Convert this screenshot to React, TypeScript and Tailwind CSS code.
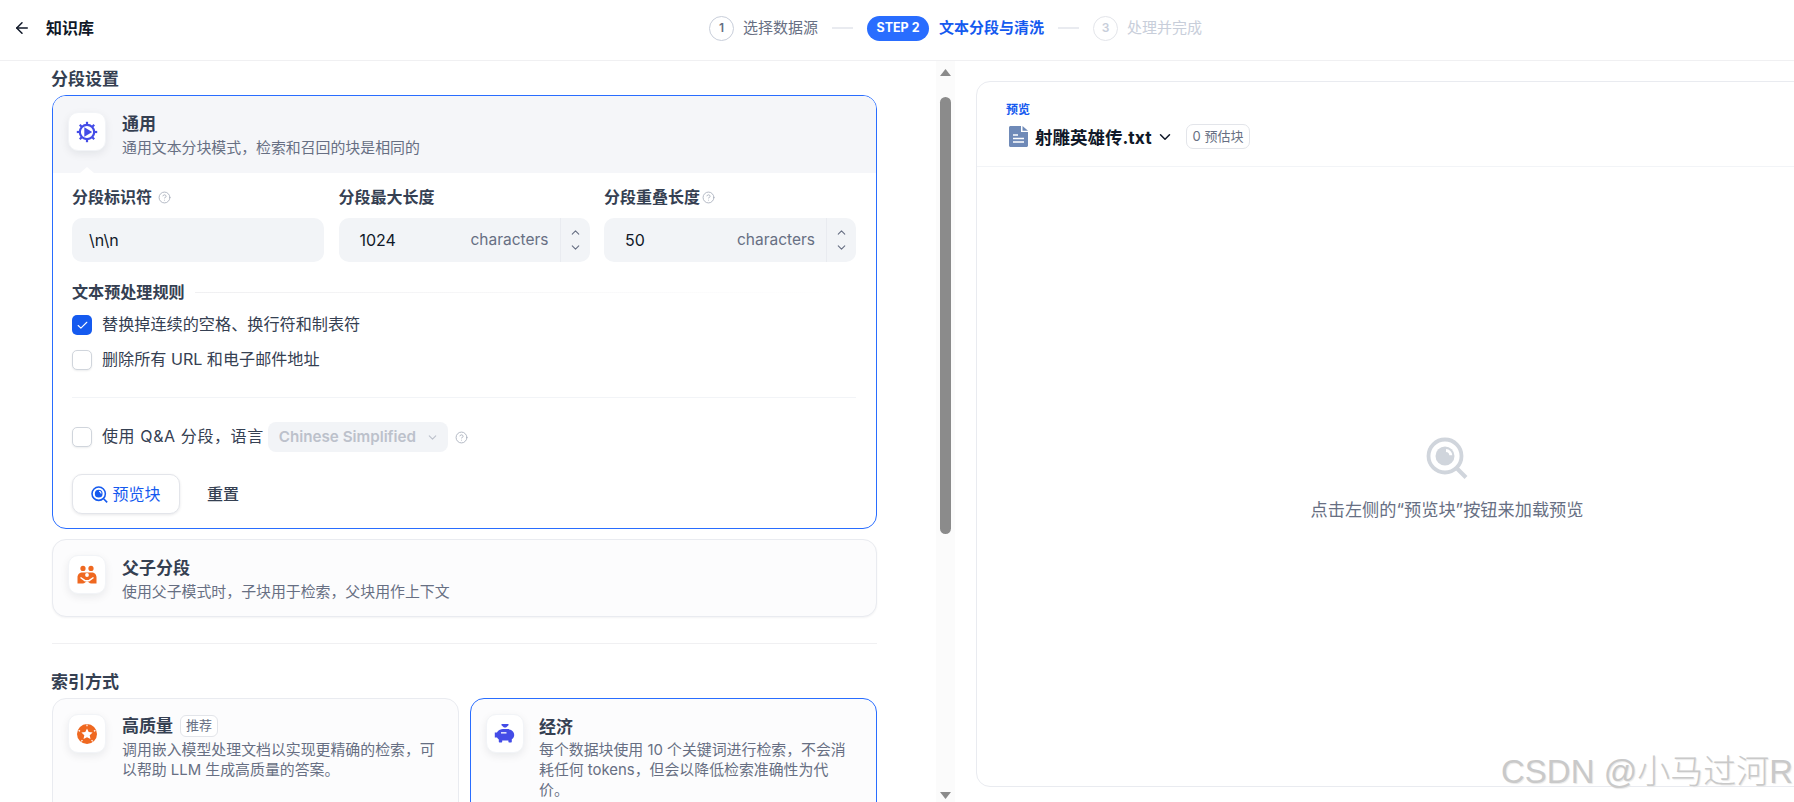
import React from "react";
import { ArrowLeft, Check, ChevronDown, ChevronUp, CircleHelp } from "lucide-react";

const GearPlayIcon = () => (
    <svg width="22" height="22" viewBox="0 0 22 22" fill="none">
        <circle cx="11" cy="11" r="7.2" stroke="#444ce7" strokeWidth="2.2" />
        {[0, 45, 90, 135, 180, 225, 270, 315].map((a) => (
            <rect key={a} x="9.900" y="0.800" width="2.200" height="3" fill="#444ce7" transform={`rotate(${a} 11 11)`} />
        ))}
        <path d="M8.300 6.300 16.200 11l-7.900 4.700z" fill="#444ce7" />
    </svg>
);

const ParentChildIcon = () => (
    <svg width="22" height="22" viewBox="0 0 22 22" fill="none">
        <circle cx="7" cy="4.400" r="2.600" fill="#ef6820" />
        <circle cx="15" cy="4.400" r="2.600" fill="#ef6820" />
        <path d="M1.500 19.500v-6.200C1.500 10.400 3.600 8.400 6.400 8.400h9.200c2.800 0 4.900 2 4.900 4.900v6.200h-5.200c-1 0-1.800-.4-2.400-.9L11 17l-1.900 1.600c-.6.5-1.400.9-2.400.9z" fill="#ef6820" />
        <circle cx="11" cy="11" r="1.900" fill="#fff" />
        <path d="M4.500 13.500 9 16.700h4l4.500-3.200" stroke="#fff" strokeWidth="1.500" />
    </svg>
);

const QualityIcon = () => (
    <svg width="22" height="22" viewBox="0 0 22 22" fill="none">
        <circle cx="11" cy="11" r="10" fill="#ef6820" />
        <path d="m11 5.400 1.700 3.600 3.900.5-2.900 2.700.8 3.900-3.500-1.900-3.500 1.900.8-3.900-2.900-2.700 3.900-.5z" fill="#fff" />
        <path d="M11 1.500v1.700M2.600 7.400l1.500.8M19.400 7.400l-1.500.8M5.400 18.300l1-1.300M16.600 18.300l-1-1.300" stroke="#fff" strokeWidth="1.200" />
    </svg>
);

const PiggyIcon = () => (
    <svg width="22" height="22" viewBox="0 0 22 22" fill="none">
        <path d="M7.500 1h7v1.200l-2.500 2.300h-2L7.500 2.200z" fill="#444ce7" />
        <path d="M.800 9.600h2.100c.8-1.600 2.300-3 4.500-3.300l1.500-.2h4c4 0 7.300 2.200 7.300 5.800 0 1.900-.9 3.300-2.400 4.400v2.500c0 .4-.3.700-.7.700h-2c-.4 0-.7-.3-.7-.7v-1.200H8.200v1.200c0 .4-.3.700-.7.700h-2c-.4 0-.7-.3-.7-.7v-2.300c-.8-.5-1.400-1.200-1.800-2H.800z" fill="#444ce7" />
        <rect x="7" y="9.200" width="5.500" height="1.300" fill="#fff" />
    </svg>
);

const PreviewIcon = ({ className, size }: { className: string; size: number }) => (
    <svg width={size} height={size} viewBox="0 0 42 42" fill="none" className={className}>
        <circle cx="19" cy="19" r="16.500" stroke="currentColor" strokeWidth="3.800" />
        <circle cx="19" cy="19" r="9.500" fill="currentColor" />
        <path d="M20 13.500a5 5 0 0 1 4.800 4.800" stroke="#fff" strokeWidth="3" />
        <path d="m31 31.500 9 9" stroke="currentColor" strokeWidth="4" />
    </svg>
);

const FileIcon = () => (
    <svg width="19" height="21" viewBox="0 0 19 21" fill="none" className="ml-[3px] shrink-0">
        <path d="M1.500 0H12v6h7v13.500c0 .8-.7 1.500-1.500 1.500h-16C.7 21 0 20.300 0 19.500v-18C0 .7.7 0 1.500 0z" fill="#6f8ab8" />
        <path d="M13.500 0 19 4.800h-5.500z" fill="#6f8ab8" />
        <path d="M4 9h5M4 12.500h11M4 16h11" stroke="#fff" strokeWidth="1.600" />
    </svg>
);

const Help = () => <CircleHelp size={13} strokeWidth={1.6} className="text-[#a8afbc] shrink-0" />;

const IconBox = ({ children }: { children: React.ReactNode }) => (
    <div className="w-[38px] h-[39px] shrink-0 rounded-[10px] bg-white border border-[#f2f4f7] shadow-[0_3px_8px_rgba(16,24,40,0.08)] flex items-center justify-center">
        {children}
    </div>
);

const ModeHeader = ({ icon, title, desc, lower }: { icon: React.ReactNode; title: string; desc: string; lower?: boolean }) => (
    <div className="flex gap-[16px]">
        <IconBox>{icon}</IconBox>
        <div className={lower ? "pt-[1px]" : ""}>
            <div className="text-[17px] leading-6 font-bold text-[#354052]">{title}</div>
            <div className="text-[14.9px] leading-6 text-[#676f83]">{desc}</div>
        </div>
    </div>
);

const NumberInput = ({ value }: { value: string }) => (
    <div className="h-[44px] rounded-[10px] bg-[#f2f4f7] flex items-center">
        <span className="flex-1 pl-[21px] text-[16px] text-[#101828]">{value}</span>
        <span className="text-[15.5px] text-[#676f83] pr-[11px]">characters</span>
        <div className="w-[30px] h-full border-l border-[#e9ebf0] flex flex-col items-center justify-center gap-[2px] text-[#676f83]">
            <ChevronUp size={13} />
            <ChevronDown size={13} />
        </div>
    </div>
);

const CheckBox = ({ checked }: { checked?: boolean }) =>
    checked ? (
        <div className="w-[20px] h-[20px] rounded-[5px] bg-[#155aef] flex items-center justify-center shrink-0">
            <Check size={13} strokeWidth={2} className="text-white" />
        </div>
    ) : (
        <div className="w-[20px] h-[20px] rounded-[5px] bg-white border border-[#d0d5dc] shadow-[0_1px_2px_rgba(16,24,40,0.08)] shrink-0" />
    );

const Step = ({ num, label, muted }: { num: string; label: string; muted?: boolean }) => (
    <div className="flex items-center gap-[9px]">
        <div
            className={
                muted
                    ? "w-[25px] h-[25px] rounded-full border-[1.5px] border-[#e3e5ea] flex items-center justify-center text-[12px] font-semibold text-[#c8ceda]"
                    : "w-[25px] h-[25px] rounded-full border-[1.5px] border-[#c8ceda] flex items-center justify-center text-[12px] font-semibold text-[#676f83]"
            }
        >
            {num}
        </div>
        <span className={muted ? "text-[15px] text-[#c8ceda]" : "text-[15px] text-[#676f83]"}>{label}</span>
    </div>
);

const Dash = () => <div className="w-[21px] h-[1.5px] bg-[#e9ebf0] mx-[14px]" />;

const Scrollbar = () => (
    <div className="w-[19px] shrink-0 h-full bg-[#fbfbfb] flex flex-col items-center">
        <svg width="11" height="7" viewBox="0 0 11 7" className="mt-[8px] shrink-0">
            <path d="M5.500 0 11 7H0z" fill="#8b8b8b" />
        </svg>
        <div className="w-[11px] h-[437px] mt-[21px] rounded-full bg-[#8b8b8b] shrink-0" />
        <svg width="11" height="7" viewBox="0 0 11 7" className="mt-auto mb-[3px] shrink-0">
            <path d="M5.500 7 11 0H0z" fill="#8b8b8b" />
        </svg>
    </div>
);

export default function App() {
    return (
        <div className="relative h-screen w-full overflow-hidden bg-white flex flex-col font-[Inter,'Noto_Sans_CJK_SC',sans-serif]">
            {/* top bar */}
            <header className="h-[61px] shrink-0 border-b border-[#f0f0f2] flex items-center pb-[4px]">
                <div className="w-[709px] shrink-0 flex items-center pl-[13px] gap-[15px]">
                    <ArrowLeft size={18} strokeWidth={2} className="text-[#101828]" />
                    <span className="text-[16px] font-semibold text-[#101828]">知识库</span>
                </div>
                <Step num="1" label="选择数据源" />
                <Dash />
                <div className="flex items-center gap-[10px]">
                    <div className="w-[62px] h-[25px] rounded-full bg-[#296dff] text-white text-[12.5px] font-bold flex items-center justify-center">
                        STEP 2
                    </div>
                    <span className="text-[15px] font-semibold text-[#155aef]">文本分段与清洗</span>
                </div>
                <Dash />
                <Step num="3" label="处理并完成" muted />
            </header>

            <div className="flex-1 min-h-0 flex">
                {/* settings column */}
                <div className="w-[936px] shrink-0 pl-[52px] pr-[59px] pt-[6px] overflow-hidden">
                    <h2 className="-ml-px text-[17px] leading-6 font-bold text-[#354052] mb-[4px]">分段设置</h2>

                    <div className="rounded-[14px] border border-[#296dff] overflow-hidden">
                        <div className="relative h-[77px] bg-[#f5f6f9] pl-[15px] pt-[16px]">
                            <ModeHeader icon={<GearPlayIcon />} title="通用" desc="通用文本分块模式，检索和召回的块是相同的" />
                            <div className="absolute left-[27px] bottom-0 w-0 h-0 border-x-[7px] border-x-transparent border-b-[6px] border-b-white" />
                        </div>
                        <div className="pl-[19px] pr-[20px] pt-[13px] pb-[14px]">
                            <div className="grid grid-cols-[252px_251px_1fr] gap-[14.5px]">
                                <div>
                                    <div className="h-6 pb-[2px] flex items-center gap-[6px] text-[16px] font-semibold text-[#354052] mb-[8px]">
                                        分段标识符 <Help />
                                    </div>
                                    <div className="h-[44px] rounded-[10px] bg-[#f2f4f7] flex items-center pl-[17px] text-[16px] text-[#101828]">
                                        {"\\n\\n"}
                                    </div>
                                </div>
                                <div>
                                    <div className="h-6 pb-[2px] flex items-center text-[16px] font-semibold text-[#354052] mb-[8px]">分段最大长度</div>
                                    <NumberInput value="1024" />
                                </div>
                                <div>
                                    <div className="h-6 pb-[2px] flex items-center gap-[2px] text-[16px] font-semibold text-[#354052] mb-[8px]">
                                        分段重叠长度 <Help />
                                    </div>
                                    <NumberInput value="50" />
                                </div>
                            </div>

                            <div className="flex items-center gap-[10px] mt-[18px]">
                                <span className="text-[16.1px] leading-6 font-semibold text-[#354052]">文本预处理规则</span>
                                <div className="flex-1 h-px bg-gradient-to-r from-[#f0f0f2] to-white" />
                            </div>
                            <div className="flex items-center gap-[10px] mt-[11px] h-[20px]">
                                <CheckBox checked />
                                <span className="pb-[2px] text-[16.15px] text-[#354052]">替换掉连续的空格、换行符和制表符</span>
                            </div>
                            <div className="flex items-center gap-[10px] mt-[15px] h-[20px]">
                                <CheckBox />
                                <span className="pb-[2px] text-[16.1px] text-[#354052]">删除所有 URL 和电子邮件地址</span>
                            </div>

                            <div className="h-px bg-[#f2f4f7] mt-[27px]" />

                            <div className="flex items-center mt-[24px] h-[30px]">
                                <CheckBox />
                                <span className="pb-[2px] text-[16px] tracking-[0.6px] text-[#354052] ml-[10px]">使用 Q&amp;A 分段，语言</span>
                                <div className="w-[180px] h-[30px] ml-[4px] rounded-[8px] bg-[#f2f4f7] flex items-center justify-between pl-[11px] pr-[9px]">
                                    <span className="text-[15.2px] font-semibold text-[#bcc1cb]">Chinese Simplified</span>
                                    <ChevronDown size={13} className="text-[#bcc1cb]" />
                                </div>
                                <span className="ml-[7px]">
                                    <Help />
                                </span>
                            </div>

                            <div className="flex items-center mt-[22px]">
                                <button className="w-[108px] h-[40px] rounded-[10px] border border-[#e3e5ea] bg-white shadow-[0_1px_3px_rgba(16,24,40,0.1)] flex items-center justify-center gap-[4px] text-[16px] text-[#155aef]">
                                    <PreviewIcon size={17} className="text-[#155aef]" />
                                    预览块
                                </button>
                                <button className="ml-[27px] text-[16px] font-medium text-[#354052]">重置</button>
                            </div>
                        </div>
                    </div>

                    <div className="mt-[10px] h-[78px] rounded-[14px] border border-[#e9ebf0] bg-[#fcfcfd] shadow-[0_1px_2px_rgba(16,24,40,0.05)] pl-[15px] pt-[15px]">
                        <ModeHeader lower icon={<ParentChildIcon />} title="父子分段" desc="使用父子模式时，子块用于检索，父块用作上下文" />
                    </div>

                    <div className="h-px bg-[#f0f0f2] mt-[26px]" />

                    <h2 className="-ml-px text-[17px] leading-6 font-bold text-[#354052] mt-[26px] mb-[4px]">索引方式</h2>

                    <div className="grid grid-cols-2 gap-[11px]">
                        <div className="h-[140px] rounded-[14px] border border-[#e9ebf0] bg-[#fcfcfd] pl-[15px] pt-[15px] pr-[20px] flex gap-[16px]">
                            <IconBox>
                                <QualityIcon />
                            </IconBox>
                            <div>
                                <div className="flex items-center gap-[7px] h-[24px]">
                                    <span className="pt-[2px] text-[17px] font-bold text-[#354052]">高质量</span>
                                    <span className="h-[22px] px-[5px] rounded-[6px] border-[1.5px] border-[#e3e5ea] bg-white flex items-center text-[13px] text-[#676f83]">
                                        推荐
                                    </span>
                                </div>
                                <div className="mt-[2px] text-[14.9px] leading-5 text-[#676f83]">
                                    调用嵌入模型处理文档以实现更精确的检索，可以帮助 LLM 生成高质量的答案。
                                </div>
                            </div>
                        </div>
                        <div className="h-[140px] rounded-[14px] border border-[#296dff] bg-[#fcfcfd] pl-[15px] pt-[15px] pr-[27px] flex gap-[15px]">
                            <IconBox>
                                <PiggyIcon />
                            </IconBox>
                            <div>
                                <div className="pt-[1px] text-[17px] leading-6 font-bold text-[#354052]">经济</div>
                                <div className="mt-[1px] text-[14.9px] leading-5 text-[#676f83]">
                                    每个数据块使用 10 个关键词进行检索，不会消耗任何 tokens，但会以降低检索准确性为代价。
                                </div>
                            </div>
                        </div>
                    </div>
                </div>

                <Scrollbar />

                {/* preview panel, runs past the right edge of the window */}
                <div className="w-[942px] shrink-0 ml-[21px] mt-[20px] mb-[15px] rounded-[14px] border border-[#e9ebf0] bg-white flex flex-col">
                    <div className="h-[85px] shrink-0 border-b border-[#f2f4f7] pl-[29px] pt-[20px]">
                        <div className="text-[12px] leading-4 font-semibold text-[#155aef]">预览</div>
                        <div className="flex items-center mt-[6px] h-[25px]">
                            <FileIcon />
                            <span className="ml-[7px] pt-[4px] text-[17.5px] font-bold text-[#101828]">射雕英雄传.txt</span>
                            <ChevronDown size={18} strokeWidth={2} className="ml-[4px] text-[#101828]" />
                            <span className="ml-[12px] h-[25px] px-[6px] rounded-[7px] border-[1.5px] border-[#e3e5ea] flex items-center text-[13px] text-[#676f83]">
                                0 预估块
                            </span>
                        </div>
                    </div>
                    <div className="flex-1 flex flex-col items-center pt-[270px]">
                        <PreviewIcon size={42} className="text-[#d0d5dc]" />
                        <div className="mt-[19px] text-[17.2px] leading-6 text-[#676f83]">点击左侧的“预览块”按钮来加载预览</div>
                    </div>
                </div>
            </div>

            {/* CSDN watermark sits over the page */}
            <div className="absolute left-[1501px] top-[752px] whitespace-nowrap text-[33px] leading-[40px] font-light text-[#c9c9c9] [text-shadow:1px_1px_1px_#e8e8e8] font-['Liberation_Sans','Noto_Sans_CJK_SC',sans-serif]">
                CSDN @小马过河R
            </div>
        </div>
    );
}
